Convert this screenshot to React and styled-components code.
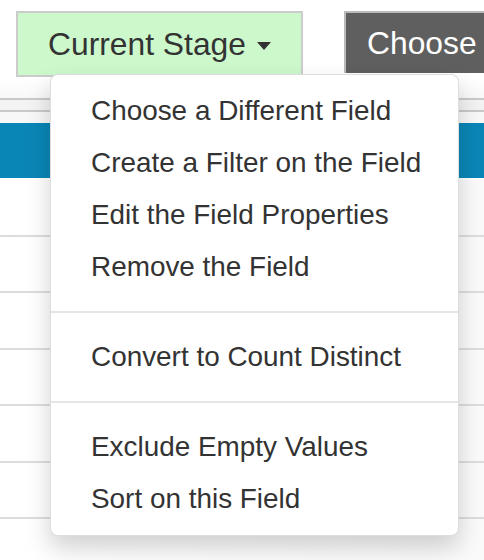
import React from "react";
import styled, { createGlobalStyle } from "styled-components";

const Global = createGlobalStyle`
  html, body {
    margin: 0;
    padding: 0;
    background: #ffffff;
    font-family: "Liberation Sans", Arial, sans-serif;
    color: #333333;
  }
  #root {
    width: 484px;
    height: 560px;
    overflow: hidden;
  }
`;

const Page = styled.div`
  width: 484px;
  height: 560px;
  overflow: hidden;
  position: relative;
`;

const Toolbar = styled.div`
  display: flex;
  align-items: flex-start;
  gap: 41px;
  padding: 11px 0 0 16px;
  height: 66px;
  position: relative;
  z-index: 2;
`;

const DropdownWrap = styled.div`
  position: relative;
`;

const StageButton = styled.button`
  display: flex;
  align-items: center;
  box-sizing: border-box;
  width: 287px;
  height: 66px;
  margin: 0;
  padding: 0 0 0 30px;
  border: 2px solid #cccccc;
  background: #ccf8cc;
  color: #333333;
  font-family: "Liberation Sans", Arial, sans-serif;
  font-size: 31.8px;
  white-space: nowrap;
`;

const Caret = styled.span`
  display: inline-block;
  width: 0;
  height: 0;
  margin-left: 11px;
  margin-top: 4px;
  border-left: 7.5px solid transparent;
  border-right: 7.5px solid transparent;
  border-top: 8px solid #333333;
`;

const ChooseButton = styled.button`
  display: flex;
  align-items: center;
  box-sizing: border-box;
  width: 200px;
  height: 62px;
  margin: 0;
  padding: 0 0 0 21px;
  border: 2px solid #bbbbbb;
  border-bottom: none;
  background: #5f5f5f;
  color: #ffffff;
  font-family: "Liberation Sans", Arial, sans-serif;
  font-size: 31.8px;
  white-space: nowrap;
  flex-shrink: 0;
`;

const Menu = styled.ul`
  position: absolute;
  top: 63px;
  left: 34px;
  box-sizing: border-box;
  width: 409px;
  margin: 0;
  padding: 10px 0;
  list-style: none;
  background: #ffffff;
  border: 1.5px solid rgba(0, 0, 0, 0.13);
  border-radius: 8px;
  box-shadow: 0 12px 24px rgba(0, 0, 0, 0.18);
  z-index: 5;
`;

const Item = styled.li`
  padding: 6px 40px;
  font-size: 27.9px;
  line-height: 40px;
  color: #333333;
  white-space: nowrap;
`;

const Divider = styled.li`
  height: 2px;
  margin: 18px 0;
  background: #e5e5e5;
`;

const Table = styled.div`
  display: flex;
  flex-direction: column;
`;

const TopGap = styled.div`
  height: 21px;
  background: linear-gradient(#ffffff, #f8f8f8);
`;

const Band = styled.div`
  height: 10px;
  border-top: 2px solid #c9c9c9;
  border-bottom: 2px solid #c9c9c9;
  background: #f3f3f3;
`;

const BandGap = styled.div`
  height: 11px;
  background: #f8f8f8;
`;

const Header = styled.div`
  height: 55px;
  background: #0a86b6;
`;

const Rows = styled.div`
  padding-top: 2px;
`;

const Row = styled.div`
  box-sizing: border-box;
  height: 56.5px;
  border-bottom: 2px solid #dddddd;
  background: linear-gradient(90deg, #ffffff, #fafafa);
`;

const items = [
  ["Choose a Different Field", "Create a Filter on the Field", "Edit the Field Properties", "Remove the Field"],
  ["Convert to Count Distinct"],
  ["Exclude Empty Values", "Sort on this Field"],
];

export default function App() {
  return (
    <Page>
      <Global />
      <Toolbar>
        <DropdownWrap>
          <StageButton>
            Current Stage
            <Caret />
          </StageButton>
          <Menu>
            {items.map((group, gi) => (
              <React.Fragment key={gi}>
                {gi > 0 && <Divider />}
                {group.map((label) => (
                  <Item key={label}>{label}</Item>
                ))}
              </React.Fragment>
            ))}
          </Menu>
        </DropdownWrap>
        <ChooseButton>Choose</ChooseButton>
      </Toolbar>
      <Table>
        <TopGap />
        <Band />
        <BandGap />
        <Header />
        <Rows>
          {[0, 1, 2, 3, 4, 5, 6].map((i) => (
            <Row key={i} />
          ))}
        </Rows>
      </Table>
    </Page>
  );
}
